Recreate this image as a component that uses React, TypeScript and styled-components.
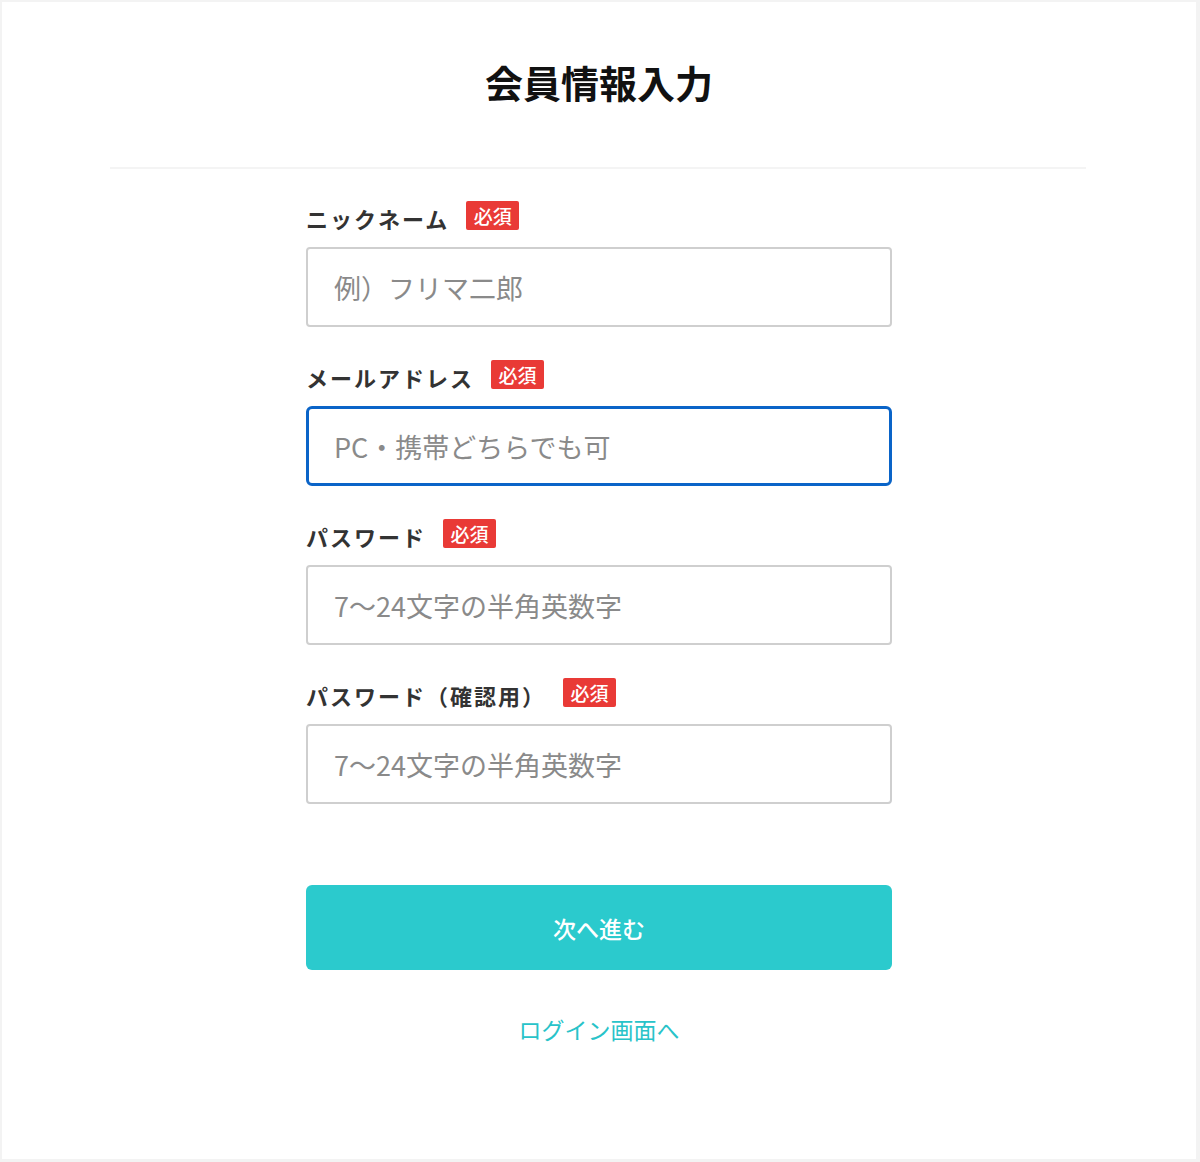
import React from "react";
import styled, { createGlobalStyle, css } from "styled-components";

const GlobalStyle = createGlobalStyle`
  html, body {
    margin: 0;
    padding: 0;
    background: #ffffff;
  }
  body {
    font-family: "Noto Sans CJK JP", "Noto Sans", sans-serif;
  }
  * { box-sizing: border-box; }
`;

const Frame = styled.div`
  min-height: 1162px;
  border-style: solid;
  border-color: #f3f3f3;
  border-width: 2px 4px 3px 2px;
  background: #ffffff;
  padding-top: 61px;
`;

const Title = styled.h1`
  margin: 0;
  text-align: center;
  font-size: 38px;
  line-height: 38px;
  font-weight: 700;
  color: #111111;
  letter-spacing: 0;
`;

const Divider = styled.hr`
  border: none;
  height: 2px;
  background: #f4f4f4;
  margin: 66px 110px 0 108px;
`;

const Form = styled.form`
  width: 586px;
  margin: 32px auto 0;
  display: flex;
  flex-direction: column;
  gap: 33px;
`;

const Field = styled.div`
  display: flex;
  flex-direction: column;
  gap: 17px;
`;

const LabelRow = styled.div`
  display: flex;
  align-items: center;
  height: 29px;
  gap: 17px;
`;

const Label = styled.label`
  font-size: 22px;
  line-height: 29px;
  font-weight: 700;
  color: #333333;
  letter-spacing: 2px;
  padding-top: 6px;
`;

const Badge = styled.span`
  display: inline-flex;
  align-items: center;
  justify-content: center;
  height: 29px;
  padding: 0 7.5px;
  background: #e93a36;
  color: #ffffff;
  font-size: 19px;
  line-height: 1;
  border-radius: 2px;
  font-weight: 500;
`;

const Input = styled.input<{ $focused?: boolean }>`
  display: block;
  width: 100%;
  height: 80px;
  padding: 0 26px;
  border: 2px solid #cfcfcf;
  border-radius: 4px;
  font-family: inherit;
  font-size: 27px;
  color: #333333;
  background: #ffffff;
  outline: none;

  &::placeholder {
    color: #8a8a8a;
  }

  ${({ $focused }) =>
    $focused &&
    css`
      border: 3px solid #0a64c8;
      border-radius: 6px;
      padding: 0 25px;
    `}
`;

const SubmitButton = styled.button`
  display: block;
  width: 586px;
  height: 85px;
  margin: 81px auto 0;
  border: none;
  border-radius: 6px;
  background: #2bcacd;
  color: #ffffff;
  font-family: inherit;
  font-size: 23px;
  font-weight: 500;
  cursor: pointer;
`;

const LinkRow = styled.div`
  text-align: center;
  margin-top: 48px;
`;

const LoginLink = styled.a`
  color: #28c3c9;
  font-size: 23px;
  line-height: 23px;
  text-decoration: none;
`;

type FieldDef = {
  label: string;
  placeholder: string;
  type: string;
  focused?: boolean;
};

const fields: FieldDef[] = [
  { label: "ニックネーム", placeholder: "例）フリマ二郎", type: "text" },
  { label: "メールアドレス", placeholder: "PC・携帯どちらでも可", type: "email", focused: true },
  { label: "パスワード", placeholder: "7〜24文字の半角英数字", type: "password" },
  { label: "パスワード（確認用）", placeholder: "7〜24文字の半角英数字", type: "password" },
];

export default function App() {
  return (
    <>
      <GlobalStyle />
      <Frame>
        <Title>会員情報入力</Title>
        <Divider />
        <Form onSubmit={(e) => e.preventDefault()}>
          {fields.map((f, i) => (
            <Field key={i}>
              <LabelRow>
                <Label htmlFor={`field-${i}`}>{f.label}</Label>
                <Badge>必須</Badge>
              </LabelRow>
              <Input id={`field-${i}`} type={f.type} placeholder={f.placeholder} $focused={f.focused} />
            </Field>
          ))}
        </Form>
        <SubmitButton type="button">次へ進む</SubmitButton>
        <LinkRow>
          <LoginLink href="#">ログイン画面へ</LoginLink>
        </LinkRow>
      </Frame>
    </>
  );
}
